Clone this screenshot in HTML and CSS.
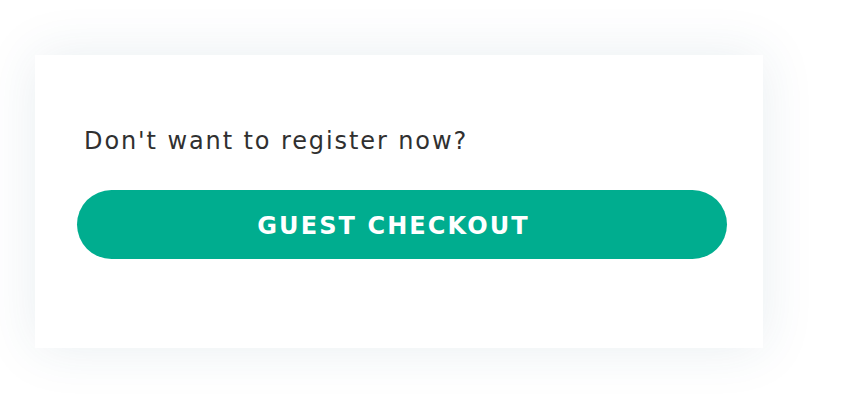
FILE: index.html
```html
<!DOCTYPE html>
<html lang="en">
<head>
    <meta charset="UTF-8">
    <title>Guest Checkout</title>
    <meta name="viewport" content="width=device-width, initial-scale=1.0">
    <link rel="stylesheet" href="styles.css">
</head>
<body>
<section class="guest-card">
    <p class="guest-text">Don't want to register now?</p>
    <button class="guest-btn">GUEST CHECKOUT</button>
</section>
</body>
</html>
```

FILE: styles.css
```css
* {
    box-sizing: border-box;
}

body {
    margin: 0;
    padding: 55px 0 59px 35px;
    background-color: #ffffff;
    font-family: "DejaVu Sans", "Open Sans", sans-serif;
}

.guest-card {
    width: 728px;
    height: 293px;
    padding: 70px 35px 0 42px;
    background-color: #ffffff;
    box-shadow: 0 0 50px rgba(40, 90, 120, 0.1);
}

.guest-text {
    margin: 0 0 33px 0;
    padding-left: 7px;
    font-size: 24px;
    line-height: 32px;
    letter-spacing: 1.9px;
    color: #303030;
}

.guest-btn {
    display: block;
    width: 650px;
    height: 69px;
    padding: 2px 17px 0 0;
    border: none;
    border-radius: 35px;
    background-color: #00ad8f;
    color: #ffffff;
    font-family: "DejaVu Sans", "Open Sans", sans-serif;
    font-size: 24px;
    font-weight: 700;
    letter-spacing: 2.1px;
}
```
